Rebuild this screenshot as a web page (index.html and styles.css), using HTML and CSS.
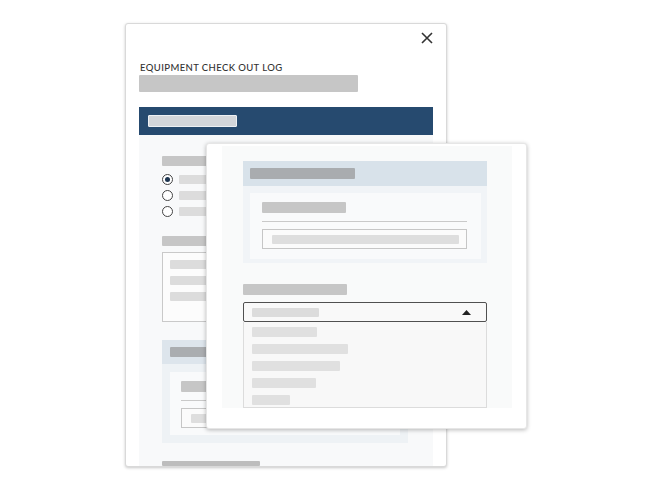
FILE: index.html
```html
<!DOCTYPE html>
<html>
<head>
<meta charset="utf-8">
<link rel="stylesheet" href="styles.css">
</head>
<body>
<div class="stage">
  <div class="card back">
    <div class="back-top">
      <div class="close-row">
        <svg class="close" width="12" height="12" viewBox="0 0 12 12"><path d="M1 1 L11 11 M11 1 L1 11" stroke="#333" stroke-width="1.6" fill="none"/></svg>
      </div>
      <div class="title">EQUIPMENT CHECK OUT LOG</div>
      <div class="bar title-bar"></div>
    </div>
    <div class="bluebar"><div class="blue-chip"></div></div>
    <div class="back-body">
      <div class="bar label-bar"></div>
      <div class="radios">
        <div class="radio-row"><span class="radio on"></span><span class="bar rbar"></span></div>
        <div class="radio-row"><span class="radio"></span><span class="bar rbar"></span></div>
        <div class="radio-row"><span class="radio"></span><span class="bar rbar"></span></div>
      </div>
      <div class="bar label-bar second"></div>
      <div class="textbox">
        <div class="bar tb"></div>
        <div class="bar tb"></div>
        <div class="bar tb"></div>
      </div>
      <div class="panel back-panel">
        <div class="panel-head"><div class="bar head-bar"></div></div>
        <div class="panel-inner">
          <div class="bar inner-label"></div>
          <div class="rule"></div>
          <div class="input"><div class="bar input-bar"></div></div>
        </div>
      </div>
      <div class="bar bottom-bar"></div>
    </div>
  </div>

  <div class="card front">
    <div class="front-inner">
      <div class="panel front-panel">
        <div class="panel-head"><div class="bar head-bar"></div></div>
        <div class="panel-inner">
          <div class="bar inner-label"></div>
          <div class="rule"></div>
          <div class="input"><div class="bar input-bar"></div></div>
        </div>
      </div>
      <div class="bar front-label"></div>
      <div class="select">
        <div class="bar sel-bar"></div>
        <svg class="caret" width="9" height="5" viewBox="0 0 9 5"><path d="M0 5 L4.5 0 L9 5 Z" fill="#222"/></svg>
      </div>
      <div class="list">
        <div class="bar li" style="width:65px"></div>
        <div class="bar li" style="width:96px"></div>
        <div class="bar li" style="width:88px"></div>
        <div class="bar li" style="width:64px"></div>
        <div class="bar li" style="width:38px"></div>
      </div>
    </div>
  </div>
</div>
</body>
</html>
```

FILE: styles.css
```css
html, body {
  margin: 0;
  padding: 0;
  background: #ffffff;
}
.stage {
  position: relative;
  width: 653px;
  height: 490px;
  overflow: hidden;
  font-family: Lato, "Liberation Sans", sans-serif;
}
.card {
  position: absolute;
  background: #ffffff;
  border-radius: 3px;
  box-sizing: border-box;
  overflow: hidden;
}
.bar {
  display: block;
  border-radius: 1px;
}

/* back card */
.back {
  left: 125px;
  top: 23px;
  width: 322px;
  height: 444px;
  border: 1px solid #d9d9d9;
  box-shadow: 0 1px 3px rgba(0,0,0,0.22);
  padding: 0 13px;
  display: flex;
  flex-direction: column;
}
.back-top {
  height: 84px;
  display: flex;
  flex-direction: column;
}
.close-row {
  display: flex;
  justify-content: flex-end;
  padding-top: 8px;
}
.title {
  margin-top: 18px;
  padding-left: 1px;
  font-size: 9.5px;
  letter-spacing: 0.4px;
  color: #333;
  line-height: 12px;
  font-weight: 500;
}
.title-bar {
  margin-top: 1px;
  width: 219px;
  height: 17px;
  background: #c6c6c6;
}
.bluebar {
  height: 28px;
  background: #264a6f;
  display: flex;
  align-items: center;
  padding-left: 9px;
}
.blue-chip {
  width: 89px;
  height: 12px;
  background: #d3d6da;
  border: 1px solid #eef1f4;
  box-sizing: border-box;
  border-radius: 1px;
}
.back-body {
  flex: 1;
  background: #f8f9fa;
  padding: 21px 0 0 23px;
  display: flex;
  flex-direction: column;
}
.label-bar {
  width: 90px;
  height: 10px;
  background: #c6c6c6;
}
.radios {
  margin-top: 8px;
  display: flex;
  flex-direction: column;
  gap: 6px;
}
.radio-row {
  display: flex;
  align-items: center;
  height: 10px;
}
.radio {
  width: 9px;
  height: 9px;
  border: 1px solid #444;
  border-radius: 50%;
  background: #fff;
  position: relative;
}
.radio.on::after {
  content: "";
  position: absolute;
  left: 2px;
  top: 2px;
  width: 5px;
  height: 5px;
  border-radius: 50%;
  background: #1d3550;
}
.rbar {
  margin-left: 6px;
  width: 60px;
  height: 9px;
  background: #dcdcdc;
}
.label-bar.second {
  margin-top: 20px;
}
.textbox {
  margin-top: 6px;
  width: 246px;
  height: 70px;
  box-sizing: border-box;
  border: 1px solid #c9c9c9;
  background: #fcfcfc;
  padding: 7px 0 0 7px;
  display: flex;
  flex-direction: column;
  gap: 7px;
}
.tb {
  width: 70px;
  height: 9px;
  background: #dcdcdc;
}
.panel {
  display: flex;
  flex-direction: column;
  box-sizing: border-box;
}
.back-panel {
  margin-top: 18px;
  width: 246px;
  height: 103px;
  background: #eef2f5;
  padding: 0 8px 8px 8px;
}
.panel-head {
  margin: 0 -8px;
  height: 24px;
  background: #dde5ec;
  display: flex;
  align-items: center;
  padding-left: 8px;
}
.back-panel .head-bar {
  width: 90px;
  height: 10px;
  background: #aaadb0;
}
.panel-inner {
  margin-top: 8px;
  flex: 1;
  background: #f9fafb;
  display: flex;
  flex-direction: column;
  padding: 9px 11px 0 11px;
}
.inner-label {
  width: 84px;
  height: 11px;
  background: #c6c6c6;
}
.rule {
  margin-top: 8px;
  height: 1px;
  background: #c9c9c9;
}
.input {
  margin-top: 7px;
  height: 20px;
  box-sizing: border-box;
  border: 1px solid #c6c6c6;
  background: #fbfbfb;
  display: flex;
  align-items: center;
  padding: 0 7px 0 9px;
}
.input-bar {
  flex: 1;
  height: 9px;
  background: #dedede;
}
.bottom-bar {
  margin-top: 18px;
  width: 98px;
  height: 5px;
  background: #bdbdbd;
}

/* front card */
.front {
  left: 206px;
  top: 143px;
  width: 321px;
  height: 286px;
  box-shadow: 0 1px 4px rgba(0,0,0,0.28);
  border: 1px solid #e6e6e6;
  padding: 2px 14px 0 15px;
}
.front-inner {
  height: 262px;
  background: #f9fafa;
  padding: 15px 0 0 21px;
  box-sizing: border-box;
  display: flex;
  flex-direction: column;
}
.front-panel {
  width: 244px;
  height: 102px;
  background: #f1f4f7;
  padding: 0 6px 4px 7px;
}
.front-panel .panel-head {
  margin: 0 -6px 0 -7px;
  height: 25px;
  padding-left: 7px;
  background: #d8e2ea;
}
.front-panel .head-bar {
  width: 105px;
  height: 11px;
  background: #a9acaf;
}
.front-panel .panel-inner {
  margin-top: 7px;
  padding: 9px 14px 0 12px;
}
.front-label {
  margin-top: 21px;
  width: 104px;
  height: 11px;
  background: #c6c6c6;
}
.select {
  margin-top: 7px;
  width: 244px;
  height: 20px;
  box-sizing: border-box;
  border: 1px solid #505050;
  border-radius: 2px;
  background: #f9f9f9;
  display: flex;
  align-items: center;
  justify-content: space-between;
  padding: 0 15px 0 8px;
}
.sel-bar {
  width: 67px;
  height: 9px;
  background: #dcdcdc;
}
.list {
  width: 244px;
  flex: 1;
  box-sizing: border-box;
  border: 1px solid #dcdcdc;
  border-top: none;
  background: #f8f8f8;
  padding: 5px 0 0 8px;
  display: flex;
  flex-direction: column;
  gap: 7.5px;
}
.li {
  height: 9.5px;
  background: #e0e0e0;
}
```
